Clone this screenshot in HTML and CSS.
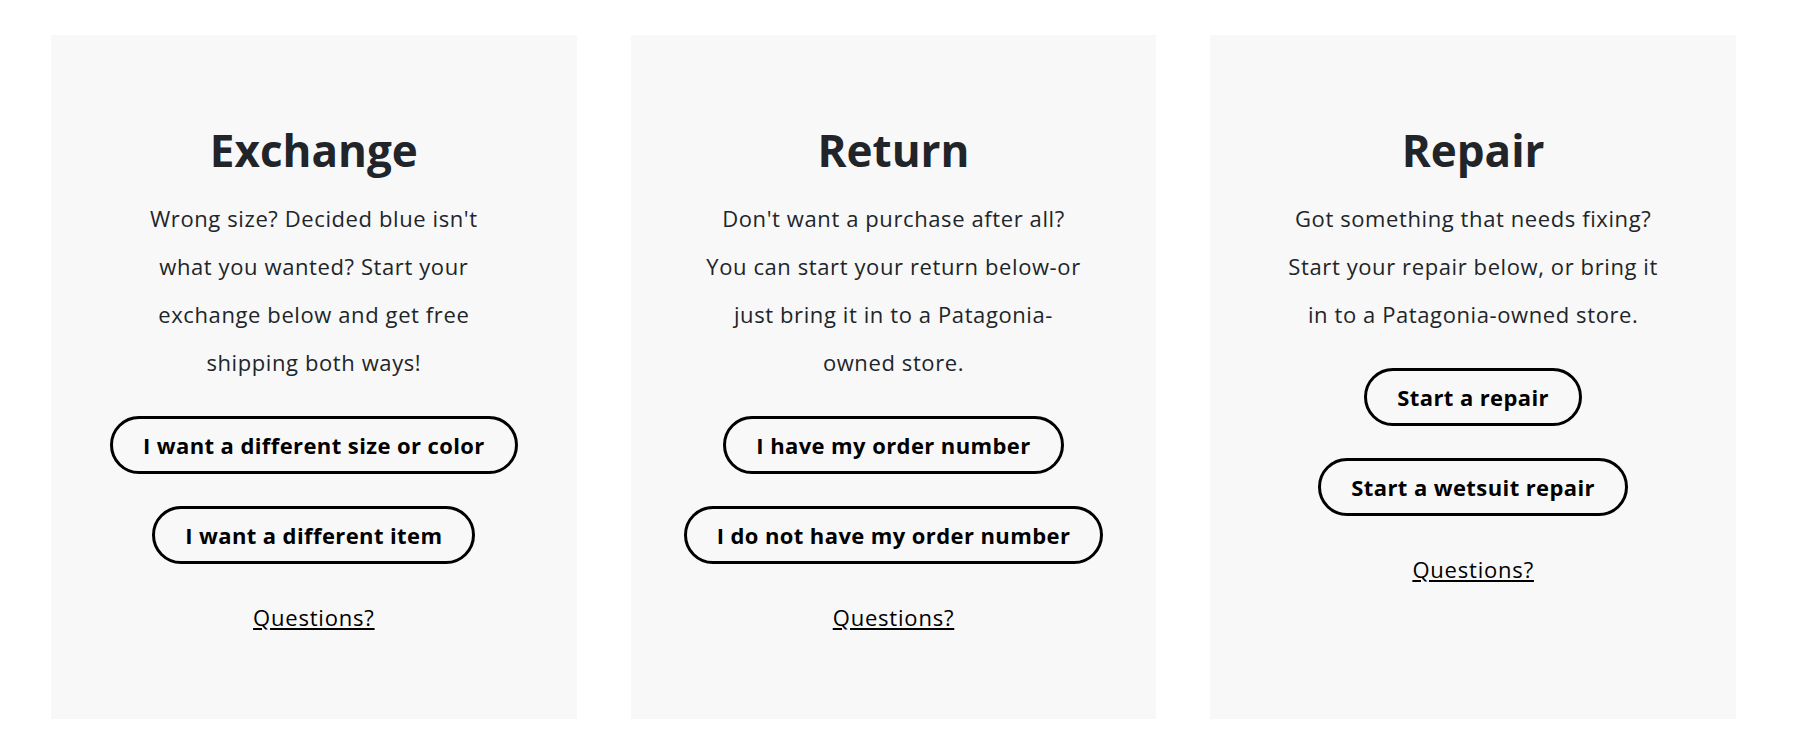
FILE: index.html
```html
<!DOCTYPE html>
<html lang="en">

<head>
    <meta charset="UTF-8">
    <meta name="viewport" content="width=device-width, initial-scale=1.0">
    <title>Returns, Exchanges &amp; Repairs</title>
    <link rel="stylesheet" href="styles.css">
</head>

<body>
    <div class="options">
        <div class="option-card">
            <h2>Exchange</h2>
            <p>Wrong size? Decided blue isn't what you wanted? Start your exchange below and get free shipping both ways!</p>
            <a class="pill-btn" href="#">I want a different size or color</a>
            <a class="pill-btn" href="#">I want a different item</a>
            <a class="questions" href="#">Questions?</a>
        </div>
        <div class="option-card">
            <h2>Return</h2>
            <p>Don't want a purchase after all? You can start your return below-or just bring it in to a Patagonia-owned store.</p>
            <a class="pill-btn" href="#">I have my order number</a>
            <a class="pill-btn" href="#">I do not have my order number</a>
            <a class="questions" href="#">Questions?</a>
        </div>
        <div class="option-card">
            <h2>Repair</h2>
            <p>Got something that needs fixing? Start your repair below, or bring it in to a Patagonia-owned store.</p>
            <a class="pill-btn" href="#">Start a repair</a>
            <a class="pill-btn" href="#">Start a wetsuit repair</a>
            <a class="questions" href="#">Questions?</a>
        </div>
    </div>
</body>

</html>
```

FILE: styles.css
```css
body {
    font-family: 'Open Sans', 'Liberation Sans', sans-serif;
    margin: 0;
    padding: 0;
    background-color: #ffffff;
    color: #212529;
}
.options {
    display: grid;
    grid-template-columns: repeat(3, 1fr);
    gap: 54px;
    width: 1685px;
    padding: 35px 0 25px 51px;
}
.option-card {
    background-color: #f8f8f8;
    height: 684px;
    box-sizing: border-box;
    padding-top: 88px;
    display: flex;
    flex-direction: column;
    align-items: center;
    text-align: center;
}
.option-card h2 {
    font-size: 44px;
    font-weight: 700;
    line-height: 54px;
    margin: 0 0 17px;
    color: #212529;
}
.option-card p {
    font-size: 22px;
    letter-spacing: 0.6px;
    line-height: 48px;
    max-width: 380px;
    margin: 0 0 30px;
}
.pill-btn {
    display: inline-block;
    padding: 13px 30px;
    border: 3px solid #000000;
    border-radius: 40px;
    color: #000000;
    text-decoration: none;
    font-size: 22px;
    font-weight: 700;
    letter-spacing: 0.4px;
    line-height: 26px;
    margin-bottom: 32px;
}
.questions {
    margin-top: 9px;
    font-size: 22px;
    letter-spacing: 0.8px;
    line-height: 25px;
    color: #000000;
    text-decoration: underline;
}
```
